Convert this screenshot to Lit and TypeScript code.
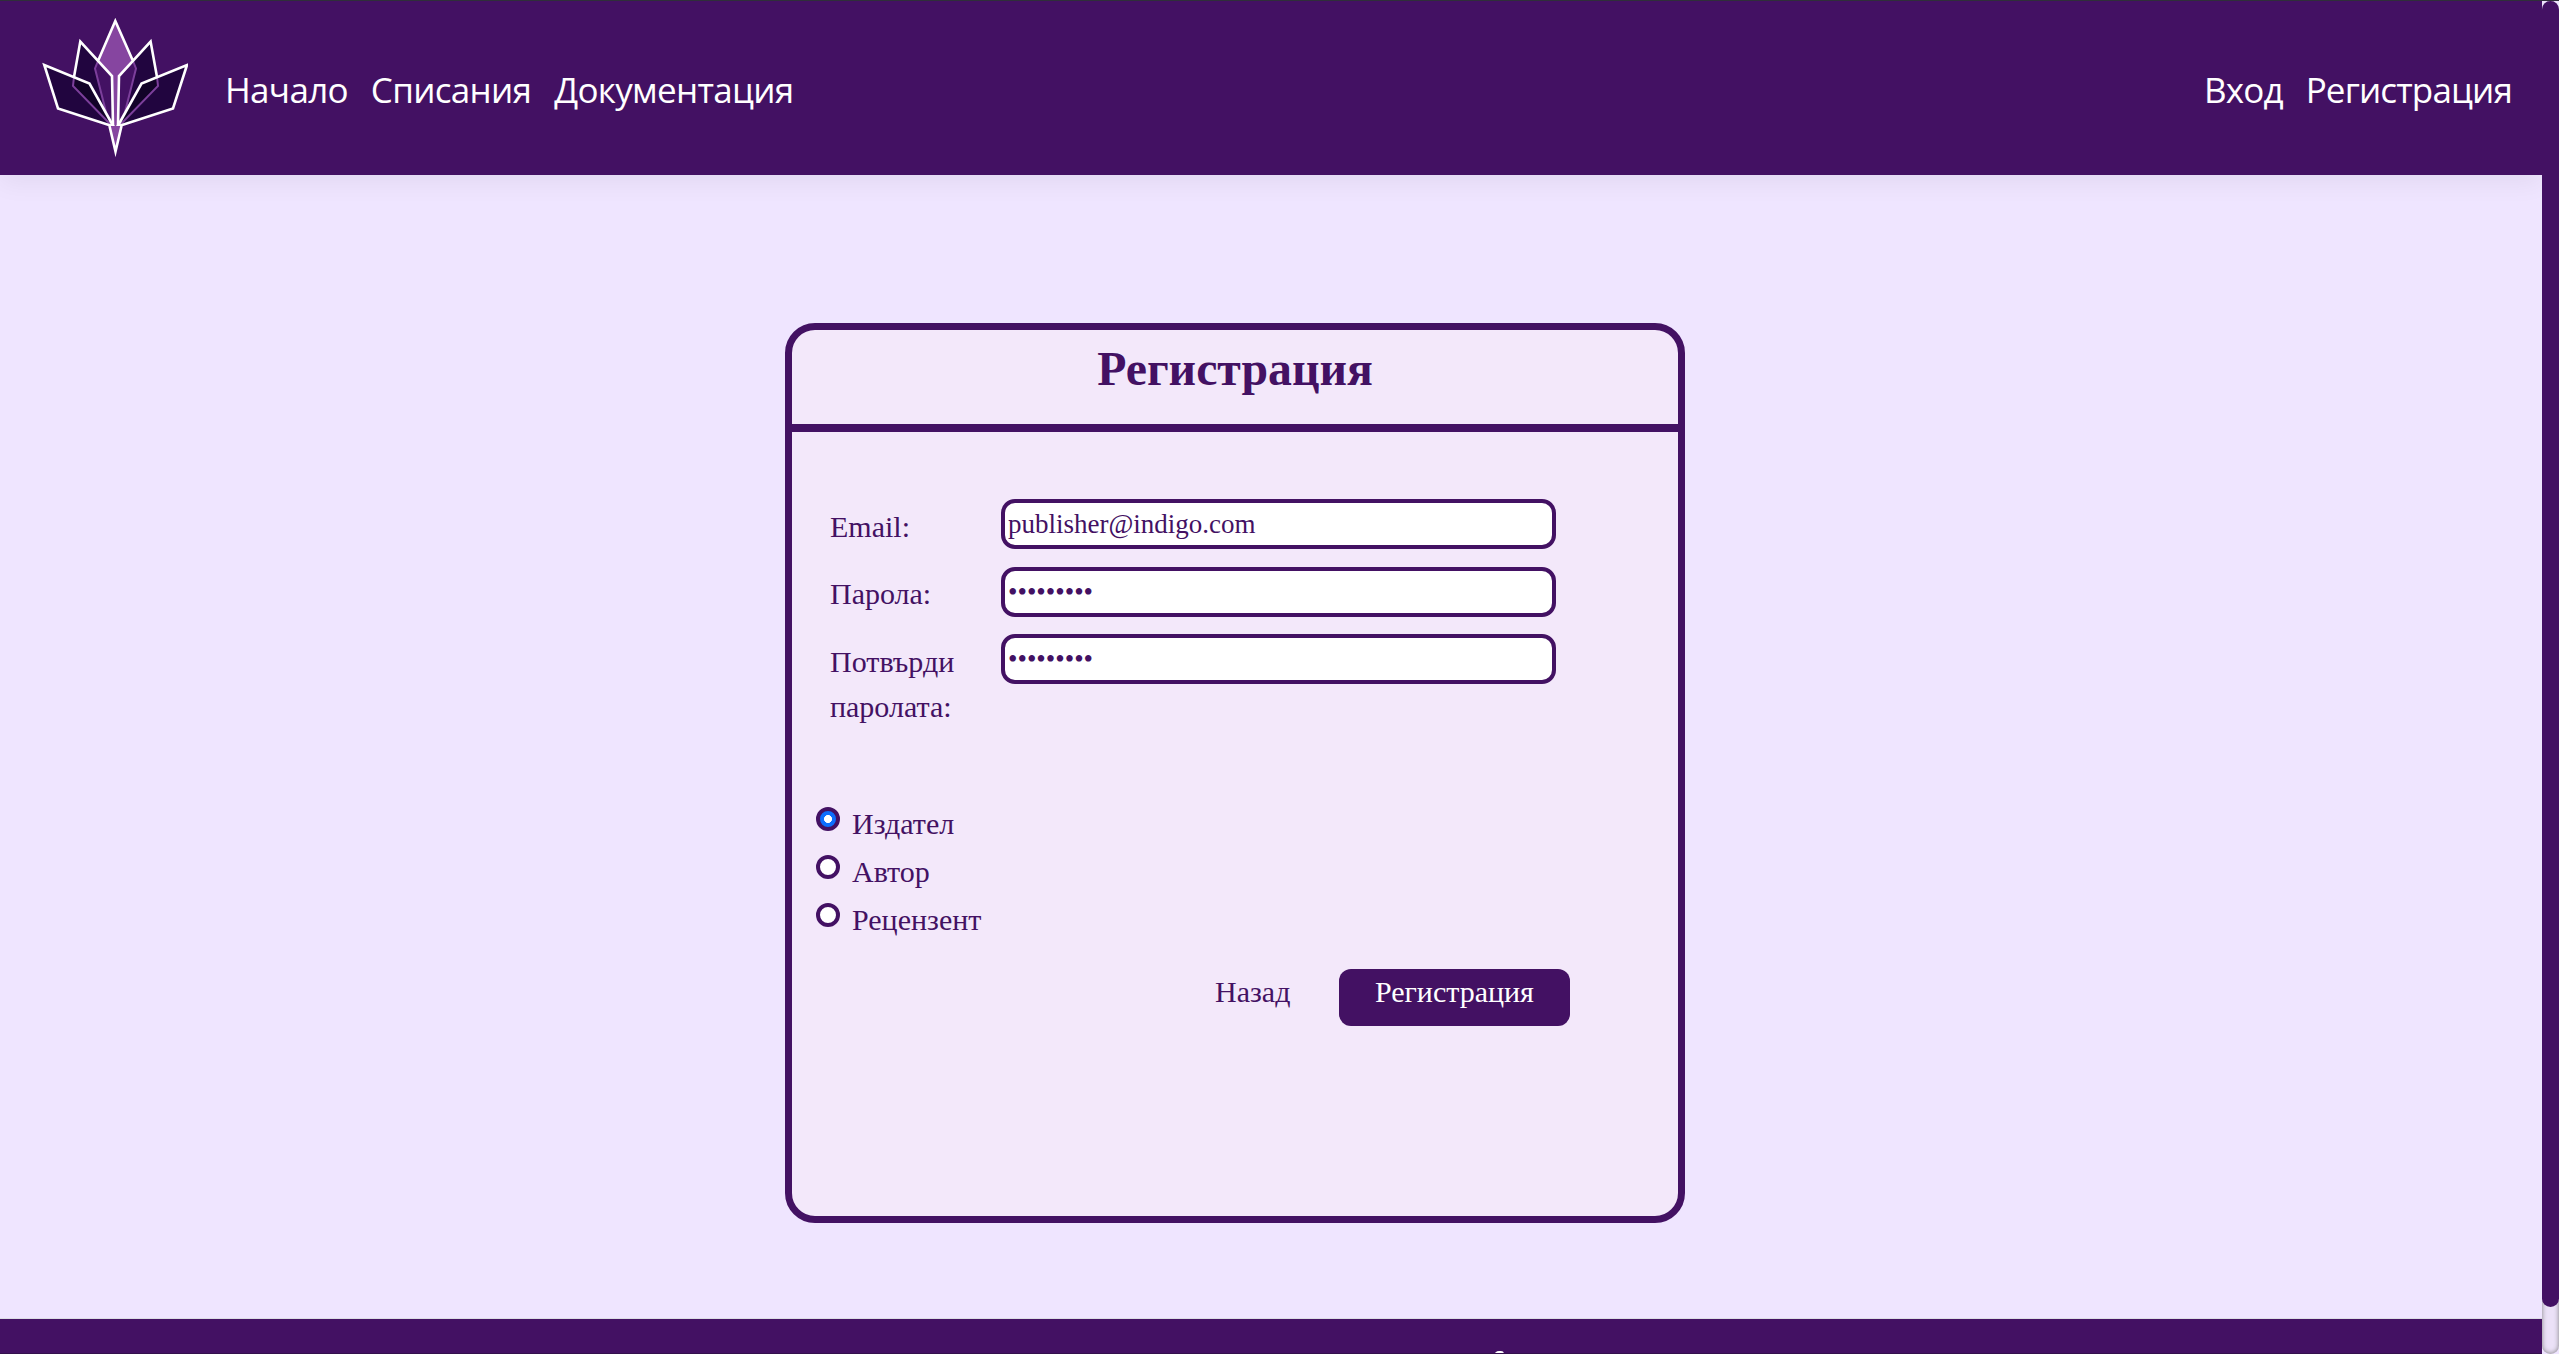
import { LitElement, html, css } from "lit";
import { customElement } from "lit/decorators.js";

@customElement("indigo-logo")
class IndigoLogo extends LitElement {
  static styles = css`
    :host { display: block; width: 146px; height: 142px; }
    svg { display: block; }
    .w { fill: none; stroke: #fff; stroke-width: 2.6; stroke-linejoin: miter; stroke-miterlimit: 10; }
    .p { fill: none; stroke: #7c3f9b; stroke-width: 2; }
    .dark { fill: #21053f; }
    .darker { fill: #120328; }
    .base { fill: #431163; }
    .lilac { fill: #8645a0; }
  `;
  render() {
    return html`<svg width="146" height="142" viewBox="42 17 146 142">
      <path class="lilac" d="M115.3 20 133 61 119 76 118 126H113L112 76 98 61Z" />
      <path class="dark" d="M80 41 98 61 95 68 105 112 113 126 73 86Z" />
      <path class="dark" d="M150.6 41 133 61 136 68 126 112 118 126 158 86Z" />
      <path class="dark" d="M44 65 89 83 113 126 58 108.500Z" />
      <path class="dark" d="M187 65 142 83 118 126 173 108.500Z" />
      <path class="darker" d="M74 77.500 89.500 83.500 112 125 73 86Z" />
      <path class="darker" d="M157 77.500 141.500 83.500 119 125 158 86Z" />
      <path class="base" d="M98 61 112 76 113 126 106 112 95 68Z" />
      <path class="base" d="M133 61 119 76 118 126 125 112 136 68Z" />
      <path class="p" d="M98 61 95 68.500 106 112M133 61 136 68.500 125 112M74 77 73 86 112 126M157 77 158 86 119 126" />
      <path class="w" d="M98 61 115.300 21 133 61M74 77 80.300 41.500 112 76 113 126M157 77 150.600 41.500 119 76 118 126" />
      <path class="w" d="M113.500 126.500 89.500 83.500 44.300 65 58 108.500ZM117.500 126.500 141.500 83.500 187 65 173 108.500Z" />
      <path class="lilac" d="M109 126 115.500 153 122 126Z" />
      <path class="w" d="M109.500 126 115.500 151.500 121.500 126" />
    </svg>`;
  }
}

@customElement("app-root")
class AppRoot extends LitElement {
  static styles = css`
    :host {
      display: flex; width: 2559px; height: 1354px; overflow: hidden; box-sizing: border-box;
      border-top: 1px solid #2f2f3a;
      font-family: "Liberation Serif", serif; color: #431163; background: #efe5ff;
    }
    * { box-sizing: border-box; }
    .page { flex: 1; min-width: 0; display: flex; flex-direction: column; }
    .header {
      height: 174px; flex: none; background: #431163; display: flex; align-items: center;
      justify-content: space-between; padding: 0 30px 0 42px; box-shadow: 0 8px 24px rgba(0, 0, 0, 0.055);
      font-family: "Open Sans", "Noto Sans", sans-serif; font-size: 35px; letter-spacing: -0.7px;
      line-height: 54px; color: #fff;
    }
    .group { display: flex; align-items: center; gap: 23px; }
    .account { letter-spacing: -0.85px; }
    .link { padding-top: 4px; }
    indigo-logo { margin-right: 14px; }
    .main { flex: 1; display: flex; padding: 148px 0 0 785px; }
    .card { width: 900px; height: 900px; border: 7px solid #431163; border-radius: 30px; background: #f3e8fa; }
    .title {
      margin: 0; height: 102px; border-bottom: 8px solid #431163; text-align: center;
      font-size: 47.8px; font-weight: 700; line-height: 58px; padding-top: 10px;
    }
    .form { padding: 67px 0 0 24px; font-size: 30px; line-height: 45px; }
    .row { display: flex; height: 67.5px; padding-left: 14px; }
    .label { width: 171px; padding-top: 4.8px; }
    .input {
      width: 555px; height: 50px; border: 4px solid #431163; border-radius: 14px; background: #fff;
      padding: 1px 0 0 3px; margin: 0; font: 27px "Liberation Serif", serif; color: #431163;
    }
    .roles { margin-top: 100px; display: flex; flex-direction: column; }
    .role { display: flex; height: 48px; gap: 12px; }
    .name { margin-top: -1px; }
    .radio {
      width: 24px; height: 24px; border: 4px solid #431163; border-radius: 50%; background: #fff; margin-top: 5px;
    }
    .radio.on { background: radial-gradient(circle, #fff 3.7px, #0d6efd 4.3px); }
    .actions { display: flex; margin: 23px 0 0 399px; gap: 49px; }
    .button {
      width: 231px; height: 57px; border-radius: 12px; background: #431163; color: #fff; text-align: center;
      padding-right: 1px;
    }
    .footer {
      height: 36px; flex: none; border-top: 1px solid #dcdde4; background: #431163; overflow: hidden;
      border-bottom: 1px solid #33104c; display: flex; padding: 32px 0 0 1494px;
    }
    .mark { flex: none; width: 10px; height: 6px; border-radius: 5px 3px 0 0; background: #fff; }
    .track { width: 17px; background: #ebe1f7; box-shadow: inset 0 0 5px #808080; border-radius: 10px; }
    .thumb { height: 1306px; border-radius: 9px; background: #431163; }
  `;
  private fields = [
    { label: "Email:", type: "text", value: "publisher@indigo.com" },
    { label: "Парола:", type: "password", value: "indigo123" },
    { label: "Потвърди паролата:", type: "password", value: "indigo123" },
  ];
  private roles = ["Издател", "Автор", "Рецензент"];
  render() {
    return html`
      <div class="page">
        <nav class="header">
          <div class="group">
            <indigo-logo></indigo-logo>
            <span class="link">Начало</span><span class="link">Списания</span><span class="link">Документация</span>
          </div>
          <div class="group account"><span class="link">Вход</span><span class="link">Регистрация</span></div>
        </nav>
        <main class="main">
          <section class="card">
            <h1 class="title">Регистрация</h1>
            <div class="form">
              ${this.fields.map((f) => html`<div class="row">
                <label class="label">${f.label}</label>
                <input class="input" type=${f.type} .value=${f.value} />
              </div>`)}
              <div class="roles">
                ${this.roles.map((r, i) => html`<div class="role">
                  <span class="radio ${i === 0 ? "on" : ""}"></span><span class="name">${r}</span>
                </div>`)}
              </div>
              <div class="actions"><span>Назад</span><span class="button">Регистрация</span></div>
            </div>
          </section>
        </main>
        <footer class="footer"><span class="mark"></span></footer>
      </div>
      <div class="track"><div class="thumb"></div></div>
    `;
  }
}
